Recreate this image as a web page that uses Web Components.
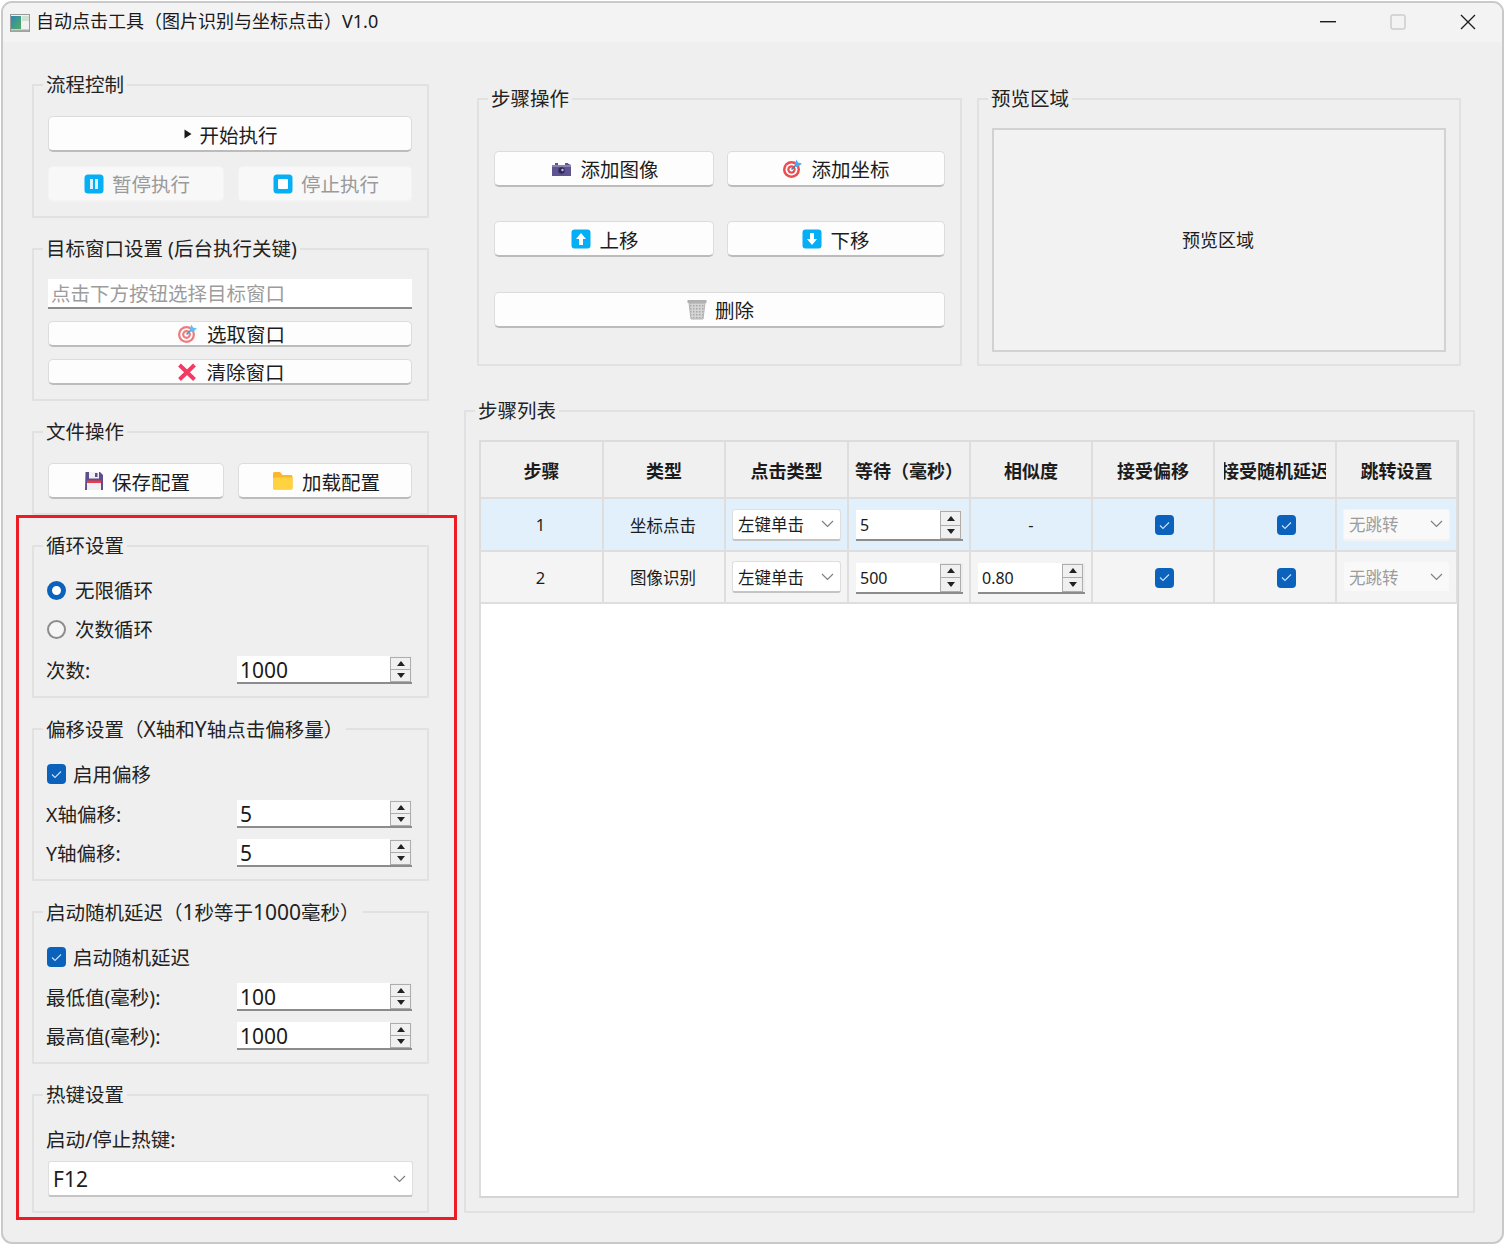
<!DOCTYPE html>
<html lang="zh-CN">
<head>
<meta charset="utf-8">
<title>自动点击工具</title>
<style>
  html, body { margin: 0; padding: 0; background: #fff; }
  body { width: 1506px; height: 1246px; position: relative; overflow: hidden; font-family: "Noto Sans", "Noto Sans CJK SC", sans-serif; color: #1c1c1c; }
  .col { display: flex; flex-direction: column; }
  .left { width: 397px; gap: 21px; flex: none; }
  .right { width: 1011px; margin-top: 14px; flex: none; }
  .top-row { display: flex; gap: 15px; padding-left: 13px; margin-bottom: 35px; }
  .two { display: grid; grid-template-columns: 176px 174px; gap: 14px; }
  .two.wide { grid-template-columns: 220px 218px; gap: 13px; }
</style>
</head>
<body>

<app-window caption="自动点击工具（图片识别与坐标点击）V1.0">
  <div class="col left">
    <group-box caption="流程控制" style="height:143px;--top:21px;--gap:14px">
      <push-button icon="play" gap="7" style="height:36px;--dy:2px">开始执行</push-button>
      <div class="two">
        <push-button icon="pause" disabled style="height:36px">暂停执行</push-button>
        <push-button icon="stop" disabled style="height:36px">停止执行</push-button>
      </div>
    </group-box>

    <group-box caption="目标窗口设置 (后台执行关键)" style="height:162px;--top:20px;--gap:12px">
      <line-edit placeholder="点击下方按钮选择目标窗口"></line-edit>
      <push-button icon="target-soft" gap="9" style="height:26px">选取窗口</push-button>
      <push-button icon="cross" gap="9" style="height:26px">清除窗口</push-button>
    </group-box>

    <group-box caption="文件操作" style="height:93px;--top:21px">
      <div class="two">
        <push-button icon="save" style="height:36px;--dy:2px">保存配置</push-button>
        <push-button icon="folder" gap="9" style="height:36px;--dy:2px">加载配置</push-button>
      </div>
    </group-box>

    <group-box caption="循环设置" style="height:162px;--top:24px;--gap:20px">
      <radio-option checked>无限循环</radio-option>
      <radio-option style="margin-top:-1px">次数循环</radio-option>
      <form-row label="次数:" value="1000" style="margin-top:-3px"></form-row>
    </group-box>

    <group-box caption='偏移设置（<span class="n">X</span>轴和<span class="n">Y</span>轴点击偏移量）' style="height:162px;--top:25px;--gap:11px">
      <check-option>启用偏移</check-option>
      <form-row label="X轴偏移:" value="5" style="margin-top:5px"></form-row>
      <form-row label="Y轴偏移:" value="5"></form-row>
    </group-box>

    <group-box caption='启动随机延迟（<span class="n">1</span>秒等于<span class="n">1000</span>毫秒）' style="height:162px;--top:25px;--gap:11px">
      <check-option>启动随机延迟</check-option>
      <form-row label="最低值(毫秒):" value="100" style="margin-top:5px"></form-row>
      <form-row label="最高值(毫秒):" value="1000"></form-row>
    </group-box>

    <group-box caption="热键设置" style="height:128px;--top:22px;--gap:10px">
      <form-label>启动/停止热键:</form-label>
      <combo-box value="F12" style="height:36px;width:365px;--f:21px;--pad:4px"></combo-box>
    </group-box>
  </div>

  <div class="col right">
    <div class="top-row">
      <group-box caption="步骤操作" style="width:485px;height:277px;--top:42px;--gap:34px;--left:15px">
        <div class="two wide">
          <push-button icon="camera" style="height:36px">添加图像</push-button>
          <push-button icon="target" style="height:36px;--pl:0">添加坐标</push-button>
        </div>
        <div class="two wide">
          <push-button icon="up" style="height:36px;--dy:2px">上移</push-button>
          <push-button icon="down" style="height:36px;--dy:2px;--pl:0">下移</push-button>
        </div>
        <push-button icon="trash" style="height:36px;width:451px;margin-top:1px">删除</push-button>
      </group-box>
      <group-box caption="预览区域" style="width:484px;height:277px;--top:19px;--left:13px">
        <preview-area>预览区域</preview-area>
      </group-box>
    </div>
    <group-box caption="步骤列表" style="height:812px;--top:19px;--left:13px">
      <step-table></step-table>
    </group-box>
  </div>
</app-window>

<mark-frame></mark-frame>

<script>
const ICONS = {
  play: '<svg width="8" height="10" viewBox="0 0 8 10"><path d="M0.5 0.5 7.5 5 0.5 9.5z" fill="#1a1a1a"/></svg>',
  pause: '<svg width="20" height="20" viewBox="0 0 20 20"><rect x="0.5" y="0.5" width="19" height="19" rx="3.5" fill="#06aef5"/><rect x="6" y="5" width="3" height="10" fill="#d8f2fd"/><rect x="11" y="5" width="3" height="10" fill="#d8f2fd"/></svg>',
  stop: '<svg width="20" height="20" viewBox="0 0 20 20"><rect x="0.5" y="0.5" width="19" height="19" rx="3.5" fill="#06aef5"/><rect x="5" y="5" width="10" height="10" rx="1" fill="#fff"/></svg>',
  up: '<svg width="20" height="20" viewBox="0 0 20 20"><rect x="0.5" y="0.5" width="19" height="19" rx="3" fill="#06aef5"/><path d="M10 4 15 10H12V16H8V10H5z" fill="#fff"/></svg>',
  down: '<svg width="20" height="20" viewBox="0 0 20 20"><rect x="0.5" y="0.5" width="19" height="19" rx="3" fill="#06aef5"/><path d="M10 16 15 10H12V4H8V10H5z" fill="#fff"/></svg>',
  target: '<svg width="21" height="21" viewBox="0 0 21 21"><circle cx="9.5" cy="11.5" r="8.5" fill="#ee4a4f"/><circle cx="9.5" cy="11.5" r="6" fill="#fff"/><circle cx="9.5" cy="11.5" r="4.2" fill="#ee4a4f"/><circle cx="9.5" cy="11.5" r="2" fill="#fff"/><path d="M9.5 11.5 15 6" stroke="#3c7fc4" stroke-width="1.6"/><path d="M14.5 1.5 16 4.5 20 5.5 17 8 14 9 13 5.5z" fill="#45aef2"/></svg>',
  'target-soft': '<svg width="21" height="21" viewBox="0 0 21 21"><circle cx="9.5" cy="11.5" r="8.5" fill="#f27a7c"/><circle cx="9.5" cy="11.5" r="6.2" fill="#fff"/><circle cx="9.5" cy="11.5" r="4.4" fill="#f27a7c"/><circle cx="9.5" cy="11.5" r="2.2" fill="#fff"/><path d="M9.5 11.5 15 6" stroke="#5a8fc4" stroke-width="1.6"/><path d="M14.5 1.5 16 4.5 20 5.5 17 8 14 9 13 5.5z" fill="#63bdf5"/></svg>',
  cross: '<svg width="20" height="20" viewBox="0 0 20 20"><path d="M2.5 3 17.5 17.5M17.5 3 2.5 17.5" stroke="#f23a62" stroke-width="4"/></svg>',
  save: '<svg width="20" height="20" viewBox="0 0 20 20"><path d="M1.5 1H16l3 3v15H1z" fill="#5d4e8c"/><rect x="5" y="1" width="10" height="6.5" fill="#f2f0f6"/><rect x="11" y="2" width="2.5" height="4" fill="#5d4e8c"/><rect x="3" y="9.5" width="14" height="2.5" fill="#ee3b48"/><rect x="3" y="12" width="14" height="7" fill="#f2eff3"/></svg>',
  folder: '<svg width="21" height="19" viewBox="0 0 21 19"><path d="M1 2.5Q1 1 2.5 1H8l2.5 3H19Q20.500 4 20.500 5.500V17Q20.500 18.500 19 18.500H2.500Q1 18.500 1 17z" fill="#fbb62c"/><path d="M1 7.500Q1 6.500 2.500 6.500H19Q20.500 6.500 20.500 7.500V17Q20.500 18.500 19 18.500H2.500Q1 18.500 1 17z" fill="#ffd23f"/></svg>',
  camera: '<svg width="21" height="14" viewBox="0 0 21 14"><path d="M1 3H4V1H7V3H14V1H17V1.500L20 3V14H1z" fill="#5e5491"/><rect x="1" y="3" width="19" height="2" fill="#8a81b5"/><circle cx="10.500" cy="8.500" r="3.200" fill="#2f2a55"/><circle cx="11.500" cy="8" r="1.200" fill="#c8c4dd"/></svg>',
  trash: '<svg width="20" height="21" viewBox="0 0 20 21"><defs><pattern id="h" width="3" height="3" patternUnits="userSpaceOnUse"><rect width="3" height="3" fill="#d4d4d4"/><path d="M0 0H1.500V1.500H0z" fill="#a8a8a8"/></pattern></defs><rect x="0.500" y="1" width="19" height="3" fill="#b0b0b0"/><path d="M2 4H18L16 20H4z" fill="url(#h)"/><path d="M2 4H18L16 20H4z" fill="none" stroke="#b4b4b4"/></svg>'
};

class AppWindow extends HTMLElement {
  connectedCallback() {
    this.attachShadow({ mode: 'open' });
    this.shadowRoot.innerHTML = `
      <style>
        :host { display: block; width: 1503px; height: 1243px; margin: 1px 0 0 1px; box-sizing: border-box;
          border: 2px solid #c9c9c9; border-radius: 11px; background: #efefef; overflow: hidden; }
        .title { height: 39px; display: flex; align-items: center; background: #f3f3f3; }
        .app { margin: 0 6px 0 7px; flex: none; display: block; }
        .text { font-size: 18px; line-height: 34px; margin-top: -4px; color: #1a1a1a; white-space: nowrap; }
        .controls { margin-left: auto; margin-right: -1px; margin-top: -2px; display: flex; }
        .controls div { width: 70px; height: 39px; display: flex; align-items: center; justify-content: center; }
        main { display: flex; gap: 35px; padding: 33px 0 0 29px; }
      </style>
      <div class="title">
        <svg class="app" width="20" height="18" viewBox="0 0 20 18">
          <defs><linearGradient id="g" x1="0" y1="0" x2="1" y2="1"><stop offset="0" stop-color="#2f86b8"/><stop offset="1" stop-color="#4fae5a"/></linearGradient></defs>
          <rect x="0.500" y="0.500" width="19" height="17" fill="#f2f2f2" stroke="#9a9a9a"/>
          <rect x="1" y="2" width="10" height="13" fill="url(#g)"/>
          <rect x="12" y="2" width="7" height="5" fill="#cfe0d2"/>
          <rect x="1" y="15.500" width="18" height="2" fill="#a8a8a8"/>
        </svg>
        <span class="text">${this.getAttribute('caption')}</span>
        <div class="controls">
          <div><svg width="16" height="2" viewBox="0 0 16 2"><rect width="16" height="1.400" fill="#1a1a1a"/></svg></div>
          <div><svg width="16" height="16" viewBox="0 0 16 16"><rect x="1" y="1" width="14" height="14" rx="2" fill="none" stroke="#cdcdcd" stroke-width="1.500"/></svg></div>
          <div><svg width="16" height="16" viewBox="0 0 16 16"><path d="M1 1 15 15M15 1 1 15" stroke="#1a1a1a" stroke-width="1.300"/></svg></div>
        </div>
      </div>
      <main><slot></slot></main>
    `;
  }
}

class GroupBox extends HTMLElement {
  connectedCallback() {
    this.attachShadow({ mode: 'open' });
    this.shadowRoot.innerHTML = `
      <style>
        :host { display: block; box-sizing: border-box; }
        fieldset { box-sizing: border-box; height: 100%; margin: 0; padding: 0; min-width: 0;
          border: 2px solid #e1e1e1; border-radius: 1px; }
        legend { font-size: 19.5px; line-height: 20px; height: 20px; padding: 0 3px; margin-left: 9px; white-space: nowrap; color: #222; }
        legend .n { font-size: 21px; }
        .body { display: flex; flex-direction: column; gap: var(--gap, 0);
          padding: var(--top, 20px) 0 0 var(--left, 14px); width: calc(100% - var(--left, 14px) - 15px); }
      </style>
      <fieldset>
        <legend>${this.getAttribute('caption')}</legend>
        <div class="body"><slot></slot></div>
      </fieldset>
    `;
  }
}

class PushButton extends HTMLElement {
  connectedCallback() {
    const icon = ICONS[this.getAttribute('icon')] || '';
    this.attachShadow({ mode: 'open' });
    this.shadowRoot.innerHTML = `
      <style>
        :host { display: block; box-sizing: border-box; font-size: 19.5px; color: #1c1c1c; }
        .btn { box-sizing: border-box; height: 100%; display: flex; align-items: center; justify-content: center;
          gap: ${this.getAttribute('gap') || 8}px; background: #fdfdfd; border: 1px solid #dcdcdc;
          border-bottom: 2px solid #bcbcbc; border-radius: 5px; white-space: nowrap; padding-left: var(--pl, 2px); }
        :host([disabled]) .btn { background: #f8f8f8; border-color: #f3f3f3; color: #9a9a9a; }
        .icon { display: flex; flex: none; }
        .label { padding-top: var(--dy, 0); }
      </style>
      <div class="btn"><span class="icon">${icon}</span><span class="label"><slot></slot></span></div>
    `;
  }
}

class LineEdit extends HTMLElement {
  connectedCallback() {
    this.attachShadow({ mode: 'open' });
    this.shadowRoot.innerHTML = `
      <style>
        :host { display: block; height: 30px; box-sizing: border-box; background: #fff;
          border-bottom: 2px solid #8c8c8c; font-size: 19.5px; line-height: 30px; color: #9c9c9c; padding-left: 3px; white-space: nowrap; }
      </style>
      ${this.getAttribute('placeholder')}
    `;
  }
}

class RadioOption extends HTMLElement {
  connectedCallback() {
    this.attachShadow({ mode: 'open' });
    this.shadowRoot.innerHTML = `
      <style>
        :host { display: flex; align-items: center; gap: 9px; height: 20px; margin-left: -1px; font-size: 19.5px; color: #222; white-space: nowrap; }
        i { box-sizing: border-box; width: 19px; height: 19px; border-radius: 50%; border: 2px solid #8c8c8c; background: #f5f5f5; flex: none; }
        :host([checked]) i { border: 5.500px solid #0a62bd; background: #fff; }
        span { margin-top: -2px; }
      </style>
      <i></i><span><slot></slot></span>
    `;
  }
}

class CheckMark extends HTMLElement {
  connectedCallback() {
    this.attachShadow({ mode: 'open' });
    this.shadowRoot.innerHTML = `
      <style>
        :host { display: flex; width: 19px; height: 20px; flex: none; background: #0a62bd; border-radius: 4px; align-items: center; justify-content: center; }
      </style>
      <svg width="11" height="9" viewBox="0 0 11 9"><path d="M1 4.500 4 7.500 10 1.500" fill="none" stroke="#cfe0f3" stroke-width="1.100"/></svg>
    `;
  }
}

class CheckOption extends HTMLElement {
  connectedCallback() {
    this.attachShadow({ mode: 'open' });
    this.shadowRoot.innerHTML = `
      <style>
        :host { display: flex; align-items: center; gap: 7px; height: 20px; margin-left: -1px; font-size: 19.5px; color: #222; white-space: nowrap; }
        span { margin-top: -2px; }
      </style>
      <check-mark></check-mark><span><slot></slot></span>
    `;
  }
}

class SpinBox extends HTMLElement {
  connectedCallback() {
    this.attachShadow({ mode: 'open' });
    this.shadowRoot.innerHTML = `
      <style>
        :host { display: flex; box-sizing: border-box; width: var(--w, 175px); height: 28px; flex: none;
          border-bottom: 2px solid #8c8c8c; background: #fff; }
        :host([small]) { --w: 107px; height: 31px; margin-top: 2px; }
        .val { flex: 1; font-size: 21px; line-height: 28px; padding-left: 3px; color: #1a1a1a; }
        :host([small]) .val { font-size: 16px; line-height: 30px; padding-left: 4px; }
        .arrows { width: 22px; box-sizing: border-box; background: #ececec; padding: 1px 1px 0 0; display: flex; flex-direction: column; }
        :host([small]) .arrows { padding-right: 2px; width: 23px; }
        .arrows div { flex: 1; box-sizing: border-box; border: 1.500px solid #adadad; background: #f0f0f0; display: flex; align-items: center; justify-content: center; }
        .arrows div + div { border-top: 0; }
        .up { border-left: 4.500px solid transparent; border-right: 4.500px solid transparent; border-bottom: 5px solid #222; }
        .dn { border-left: 4.500px solid transparent; border-right: 4.500px solid transparent; border-top: 5px solid #222; }
      </style>
      <div class="val">${this.getAttribute('value')}</div>
      <div class="arrows"><div><span class="up"></span></div><div><span class="dn"></span></div></div>
    `;
  }
}

class FormLabel extends HTMLElement {
  connectedCallback() {
    this.attachShadow({ mode: 'open' });
    this.shadowRoot.innerHTML = `
      <style>
        :host { display: block; height: 24px; line-height: 26px; margin-left: -2px; font-size: 19.5px; color: #222; white-space: nowrap; }
      </style>
      <slot></slot>
    `;
  }
}

class FormRow extends HTMLElement {
  connectedCallback() {
    this.attachShadow({ mode: 'open' });
    this.shadowRoot.innerHTML = `
      <style>
        :host { display: flex; align-items: center; justify-content: space-between; height: 28px; }
      </style>
      <form-label>${this.getAttribute('label')}</form-label>
      <spin-box value="${this.getAttribute('value')}"></spin-box>
    `;
  }
}

class ComboBox extends HTMLElement {
  connectedCallback() {
    this.attachShadow({ mode: 'open' });
    this.shadowRoot.innerHTML = `
      <style>
        :host { display: flex; box-sizing: border-box; align-items: center; justify-content: space-between;
          padding: 0 6px 0 var(--pad, 5px); background: #fff; border: 1px solid #dedede; border-bottom: 2px solid #c4c4c4;
          border-radius: 3px; font-size: var(--f, 16.500px); color: #1c1c1c; white-space: nowrap; }
        :host([disabled]) { background: #f9f9f9; border-color: #f4f4f4; color: #9c9c9c; }
        svg { display: block; flex: none; }
      </style>
      <span>${this.getAttribute('value')}</span>
      <svg width="13" height="8" viewBox="0 0 13 8"><path d="M1 1 6.500 6.500 12 1" fill="none" stroke="#7c7c7c" stroke-width="1.100"/></svg>
    `;
  }
}

class PreviewArea extends HTMLElement {
  connectedCallback() {
    this.attachShadow({ mode: 'open' });
    this.shadowRoot.innerHTML = `
      <style>
        :host { display: flex; box-sizing: border-box; width: 454px; height: 224px; align-items: center; justify-content: center;
          padding: 0 2px 2px 0; background: #f2f2f2; border: 2px solid #d2d2d2; font-size: 18px; color: #1c1c1c; }
      </style>
      <slot></slot>
    `;
  }
}

class StepTable extends HTMLElement {
  connectedCallback() {
    const head = ['步骤', '类型', '点击类型', '等待（毫秒）', '相似度', '接受偏移', '接受随机延迟', '跳转设置'];
    const rows = [
      { no: '1', type: '坐标点击', wait: '5', sim: null, cls: 'sel' },
      { no: '2', type: '图像识别', wait: '500', sim: '0.80', cls: 'alt' }
    ];
    const rowHtml = rows.map(r => `
      <div class="cell mid ${r.cls}" style="padding-right:2px">${r.no}</div>
      <div class="cell mid ${r.cls}" style="padding-right:2px">${r.type}</div>
      <div class="cell ${r.cls}" style="padding-left:6px"><combo-box value="左键单击" style="width:109px;height:32px"></combo-box></div>
      <div class="cell ${r.cls}" style="padding-left:7px"><spin-box small value="${r.wait}"></spin-box></div>
      <div class="cell ${r.sim ? '' : 'mid'} ${r.cls}" style="padding-left:${r.sim ? 7 : 0}px">${r.sim ? `<spin-box small value="${r.sim}"></spin-box>` : '-'}</div>
      <div class="cell mid ${r.cls}" style="padding-left:22px"><check-mark style="margin-top:1px"></check-mark></div>
      <div class="cell mid ${r.cls}" style="padding-left:23px"><check-mark style="margin-top:1px"></check-mark></div>
      <div class="cell ${r.cls}" style="padding-left:6px"><combo-box disabled value="无跳转" style="width:107px;height:32px"></combo-box></div>
    `).join('');
    this.attachShadow({ mode: 'open' });
    this.shadowRoot.innerHTML = `
      <style>
        :host { display: block; box-sizing: border-box; width: 980px; height: 758px; background: #fff;
          border: 2px solid #d4d4d4; border-top-color: #dcdcdc; border-left-color: #dcdcdc; font-size: 16.500px; color: #1c1c1c; }
        .grid { display: grid; grid-template-columns: 123px 122px 123px 122px 122px 122px 122px 121px; grid-template-rows: 57px 53px 52px; }
        .cell { box-sizing: border-box; display: flex; align-items: center; border-right: 2px solid #dedede; border-bottom: 2px solid #dedede; white-space: nowrap; }
        .mid { justify-content: center; }
        .head { background: #f0f0f0; font-weight: 700; font-size: 18px; }
        .head span { display: flex; justify-content: center; width: 102px; margin: 0 auto; overflow: hidden; flex: none; }
        .head span.fit { width: auto; overflow: visible; }
        .sel { background: #e1f0fb; }
        .alt { background: #f4f4f4; }
      </style>
      <div class="grid">
        ${head.map(h => `<div class="cell head"><span class="${h.length < 6 || h.startsWith('等待') ? 'fit' : ''}">${h}</span></div>`).join('')}
        ${rowHtml}
      </div>
    `;
  }
}

class MarkFrame extends HTMLElement {
  connectedCallback() {
    this.attachShadow({ mode: 'open' });
    this.shadowRoot.innerHTML = `
      <style>
        :host { position: absolute; left: 16px; top: 515px; width: 441px; height: 705px; box-sizing: border-box;
          border: 3px solid #ed1c24; pointer-events: none; }
      </style>
    `;
  }
}

customElements.define('app-window', AppWindow);
customElements.define('group-box', GroupBox);
customElements.define('push-button', PushButton);
customElements.define('line-edit', LineEdit);
customElements.define('radio-option', RadioOption);
customElements.define('check-mark', CheckMark);
customElements.define('check-option', CheckOption);
customElements.define('spin-box', SpinBox);
customElements.define('form-label', FormLabel);
customElements.define('form-row', FormRow);
customElements.define('combo-box', ComboBox);
customElements.define('preview-area', PreviewArea);
customElements.define('step-table', StepTable);
customElements.define('mark-frame', MarkFrame);
</script>
</body>
</html>
